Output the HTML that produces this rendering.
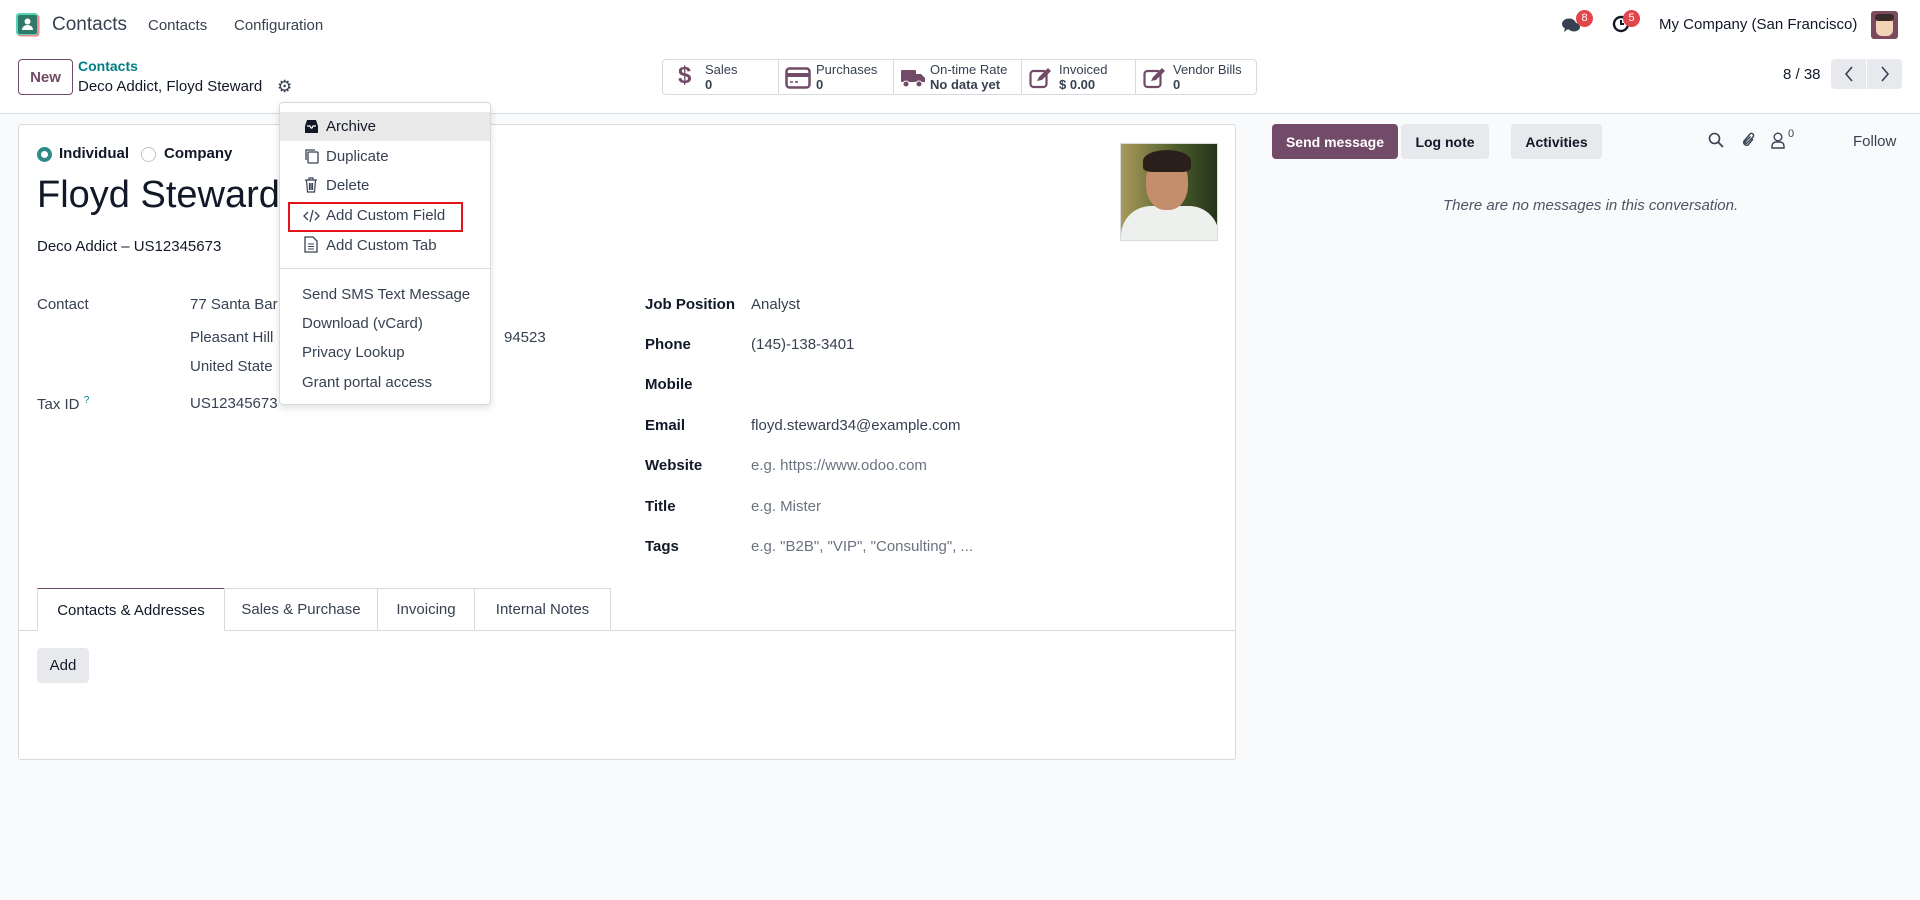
<!DOCTYPE html>
<html><head><meta charset="utf-8">
<style>
*{box-sizing:border-box;margin:0;padding:0}
body{width:1920px;height:900px;overflow:hidden;background:#f9fafb;font-family:"Liberation Sans",sans-serif;font-size:15px;color:#374151;position:relative}
.a{position:absolute;white-space:nowrap}
.nav{position:absolute;left:0;top:0;width:1920px;height:49px;background:#fff}
.cp{position:absolute;left:0;top:49px;width:1920px;height:65px;background:#fff;border-bottom:1px solid #d8dadd}
.btn{position:absolute;border-radius:4px;display:flex;align-items:center;justify-content:center;font-weight:bold}
.sheet{position:absolute;left:18px;top:124px;width:1218px;height:636px;background:#fff;border:1px solid #d8dadd;border-radius:3px}
.lbl{font-weight:bold;color:#111827}
.ph{color:#6b7280}
.dd{position:absolute;left:279px;top:102px;width:212px;height:303px;background:#fff;border:1px solid #d8dadd;border-radius:4px;box-shadow:0 3px 8px rgba(0,0,0,.12)}
.tab{position:absolute;top:588px;height:42px;border:1px solid #d8dadd;border-bottom:none;display:flex;align-items:center;justify-content:center;color:#374151}
</style></head><body>
<div class="nav">
  <svg class="a" style="left:16px;top:13px" width="24" height="24" viewBox="0 0 24 24"><rect x="1.5" y="1.5" width="22" height="22" rx="3" fill="#f08a8a"/><rect x="0" y="0" width="22" height="22" rx="3" fill="#5bd1b5"/><rect x="2" y="2" width="19" height="19" rx="2" fill="#2e7a6a"/><circle cx="11.5" cy="8.5" r="3" fill="#fff"/><path d="M6 17c0-3 2.5-5 5.5-5s5.5 2 5.5 5z" fill="#fff"/></svg>
  <div class="a" style="left:52px;top:14px;font-size:19px;color:#374151">Contacts</div>
  <div class="a" style="left:148px;top:17px">Contacts</div>
  <div class="a" style="left:234px;top:17px">Configuration</div>
  <svg class="a" style="left:1561px;top:17px" width="20" height="18" viewBox="0 0 20 18"><ellipse cx="8" cy="7" rx="7" ry="5.5" fill="#374151"/><path d="M4 11l-1 4 4-3z" fill="#374151"/><ellipse cx="13" cy="10" rx="6" ry="4.5" fill="#374151"/></svg>
  <div class="a" style="left:1576px;top:10px;width:17px;height:17px;border-radius:50%;background:#e0464b;color:#fff;font-size:11px;text-align:center;line-height:17px">8</div>
  <svg class="a" style="left:1612px;top:15px" width="18" height="18" viewBox="0 0 18 18"><circle cx="9" cy="9" r="7" fill="none" stroke="#111827" stroke-width="2.4"/><path d="M9 5v4h3" stroke="#111827" stroke-width="2" fill="none"/></svg>
  <div class="a" style="left:1623px;top:10px;width:17px;height:17px;border-radius:50%;background:#e0464b;color:#fff;font-size:11px;text-align:center;line-height:17px">5</div>
  <div class="a" style="left:1659px;top:16px;color:#111827">My Company (San Francisco)</div>
  <div class="a" style="left:1871px;top:11px;width:27px;height:28px;border-radius:3px;background:#7b4a5e;overflow:hidden"><div style="position:absolute;left:5px;top:6px;width:17px;height:19px;background:#f3d3b8;border-radius:6px"></div><div style="position:absolute;left:4px;top:3px;width:19px;height:7px;background:#3a2a2a;border-radius:4px"></div></div>
</div>
<div class="cp">
  <div class="btn" style="left:18px;top:10px;width:55px;height:36px;border:1px solid #714b67;color:#714b67;background:#fff">New</div>
  <div class="a" style="left:78px;top:9px;color:#017e84;font-weight:bold;font-size:14px">Contacts</div>
  <div class="a" style="left:78px;top:29px;color:#111827">Deco Addict, Floyd Steward</div>
  <div class="a" style="left:277px;top:28px;font-size:17px;color:#374151">⚙</div>
  <div class="a" style="left:662px;top:10px;width:595px;height:36px;border:1px solid #d8dadd;border-radius:4px;background:#fff">
    <div class="a" style="left:115px;top:0;height:34px;border-left:1px solid #d8dadd"></div>
    <div class="a" style="left:230px;top:0;height:34px;border-left:1px solid #d8dadd"></div>
    <div class="a" style="left:358px;top:0;height:34px;border-left:1px solid #d8dadd"></div>
    <div class="a" style="left:472px;top:0;height:34px;border-left:1px solid #d8dadd"></div>
    <div class="a" style="left:15px;top:2px;font-size:24px;font-weight:bold;color:#714b67">$</div>
    <div class="a" style="left:42px;top:2px;font-size:13px;line-height:15px;color:#374151">Sales<br><b>0</b></div>
    <svg class="a" style="left:122px;top:7px" width="26" height="22" viewBox="0 0 26 22"><rect x="1.5" y="1.5" width="23" height="19" rx="3" fill="none" stroke="#714b67" stroke-width="2.5"/><rect x="1" y="6" width="24" height="4" fill="#714b67"/><path d="M5 15h3M10 15h3" stroke="#714b67" stroke-width="1.5"/></svg>
    <div class="a" style="left:153px;top:2px;font-size:13px;line-height:15px">Purchases<br><b>0</b></div>
    <svg class="a" style="left:238px;top:8px" width="24" height="20" viewBox="0 0 24 20"><rect x="0" y="2" width="15" height="12" rx="1" fill="#714b67"/><path d="M15 6h5l4 4v4h-9z" fill="#714b67"/><circle cx="5" cy="16" r="3" fill="#714b67" stroke="#fff"/><circle cx="18" cy="16" r="3" fill="#714b67" stroke="#fff"/></svg>
    <div class="a" style="left:267px;top:2px;font-size:13px;line-height:15px">On-time Rate<br><b>No data yet</b></div>
    <svg class="a" style="left:366px;top:7px" width="24" height="22" viewBox="0 0 24 22"><rect x="1.5" y="4" width="16" height="16" rx="3" fill="none" stroke="#714b67" stroke-width="2.2"/><path d="M8 14l2-4 9-9 3 3-9 9z" fill="#714b67"/></svg>
    <div class="a" style="left:396px;top:2px;font-size:13px;line-height:15px">Invoiced<br><b>$ 0.00</b></div>
    <svg class="a" style="left:480px;top:7px" width="24" height="22" viewBox="0 0 24 22"><rect x="1.5" y="4" width="16" height="16" rx="3" fill="none" stroke="#714b67" stroke-width="2.2"/><path d="M8 14l2-4 9-9 3 3-9 9z" fill="#714b67"/></svg>
    <div class="a" style="left:510px;top:2px;font-size:13px;line-height:15px">Vendor Bills<br><b>0</b></div>
  </div>
  <div class="a" style="left:1783px;top:17px;color:#111827">8 / 38</div>
  <div class="btn" style="left:1831px;top:10px;width:35px;height:30px;background:#e7e9ed;border-radius:4px 0 0 4px"><svg width="10" height="16" viewBox="0 0 10 16"><path d="M8 1L2 8l6 7" fill="none" stroke="#374151" stroke-width="1.6"/></svg></div>
  <div class="btn" style="left:1867px;top:10px;width:35px;height:30px;background:#e7e9ed;border-radius:0 4px 4px 0"><svg width="10" height="16" viewBox="0 0 10 16"><path d="M2 1l6 7-6 7" fill="none" stroke="#374151" stroke-width="1.6"/></svg></div>
</div>
<div class="sheet">
  <div class="a" style="left:18px;top:22px;width:15px;height:15px;border-radius:50%;border:4px solid #2f8b87"></div>
  <div class="a lbl" style="left:40px;top:20px">Individual</div>
  <div class="a" style="left:122px;top:22px;width:15px;height:15px;border-radius:50%;border:1px solid #c0c4ca"></div>
  <div class="a lbl" style="left:145px;top:20px">Company</div>
  <div class="a" style="left:18px;top:49px;font-size:38px;color:#111827">Floyd Steward</div>
  <div class="a" style="left:18px;top:113px;color:#111827">Deco Addict – US12345673</div>
  <div class="a" style="left:18px;top:171px">Contact</div>
  <div class="a" style="left:171px;top:171px">77 Santa Bar</div>
  <div class="a" style="left:171px;top:204px">Pleasant Hill</div>
  <div class="a" style="left:485px;top:204px">94523</div>
  <div class="a" style="left:171px;top:233px">United State</div>
  <div class="a" style="left:18px;top:270px">Tax ID <sup style="color:#017e84;font-size:10px">?</sup></div>
  <div class="a" style="left:171px;top:270px">US12345673</div>
  <div class="a lbl" style="left:626px;top:171px">Job Position</div><div class="a" style="left:732px;top:171px">Analyst</div>
  <div class="a lbl" style="left:626px;top:211px">Phone</div><div class="a" style="left:732px;top:211px">(145)-138-3401</div>
  <div class="a lbl" style="left:626px;top:251px">Mobile</div>
  <div class="a lbl" style="left:626px;top:292px">Email</div><div class="a" style="left:732px;top:292px">floyd.steward34@example.com</div>
  <div class="a lbl" style="left:626px;top:332px">Website</div><div class="a ph" style="left:732px;top:332px">e.g. https://www.odoo.com</div>
  <div class="a lbl" style="left:626px;top:373px">Title</div><div class="a ph" style="left:732px;top:373px">e.g. Mister</div>
  <div class="a lbl" style="left:626px;top:413px">Tags</div><div class="a ph" style="left:732px;top:413px">e.g. "B2B", "VIP", "Consulting", ...</div>
  <div class="a" style="left:1101px;top:18px;width:98px;height:98px;border:1px solid #d8dadd;background:linear-gradient(90deg,#a99a5a,#4a5a2a 60%,#23341a);overflow:hidden">
    <div style="position:absolute;left:0;top:62px;width:98px;height:40px;background:#eef0ee;border-radius:30px 30px 0 0"></div>
    <div style="position:absolute;left:25px;top:12px;width:42px;height:54px;background:#c48d6c;border-radius:45%"></div>
    <div style="position:absolute;left:22px;top:6px;width:48px;height:22px;background:#2a1f1a;border-radius:50% 50% 20% 20%"></div>
  </div>
  <div class="a" style="left:0;top:505px;width:1216px;border-top:1px solid #d8dadd"></div>
</div>
<div class="tab" style="left:37px;width:188px;background:#fff;border-top:1px solid #714b67;color:#111827;height:43px">Contacts &amp; Addresses</div>
<div class="tab" style="left:224px;width:154px">Sales &amp; Purchase</div>
<div class="tab" style="left:377px;width:98px">Invoicing</div>
<div class="tab" style="left:474px;width:137px">Internal Notes</div>
<div class="btn" style="left:37px;top:648px;width:52px;height:35px;background:#e7e9ed;color:#111827;font-weight:normal">Add</div>

<div class="btn" style="left:1272px;top:124px;width:126px;height:35px;background:#714b67;color:#fff;font-size:14px">Send message</div>
<div class="btn" style="left:1401px;top:124px;width:88px;height:35px;background:#e7e9ed;color:#111827;font-size:14px">Log note</div>
<div class="btn" style="left:1511px;top:124px;width:91px;height:35px;background:#e7e9ed;color:#111827;font-size:14px">Activities</div>
<svg class="a" style="left:1708px;top:132px" width="16" height="16" viewBox="0 0 16 16"><circle cx="6.5" cy="6.5" r="5" fill="none" stroke="#374151" stroke-width="1.6"/><path d="M10 10l5 5" stroke="#374151" stroke-width="1.8"/></svg>
<svg class="a" style="left:1741px;top:131px" width="16" height="18" viewBox="0 0 16 18"><path d="M12 8l-5 6a3 3 0 0 1-4-4l6-7a2 2 0 0 1 3 3l-6 6a1 1 0 0 1-1.5-1.5l5-5" fill="none" stroke="#374151" stroke-width="1.4"/></svg>
<svg class="a" style="left:1771px;top:132px" width="14" height="17" viewBox="0 0 14 17"><circle cx="7" cy="5" r="3.8" fill="none" stroke="#374151" stroke-width="1.4"/><path d="M1 16v-2a4 4 0 0 1 4-4h4a4 4 0 0 1 4 4v2z" fill="none" stroke="#374151" stroke-width="1.4"/></svg>
<div class="a" style="left:1788px;top:128px;font-size:11px">0</div>
<div class="a" style="left:1853px;top:133px;color:#374151">Follow</div>
<div class="a" style="left:1443px;top:197px;font-style:italic;color:#4b5563;font-size:15px">There are no messages in this conversation.</div>

<div class="dd">
  <div class="a" style="left:0;top:9px;width:210px;height:29px;background:#e9e9ea"></div>
  <svg class="a" style="left:24px;top:16px" width="15" height="15" viewBox="0 0 15 15"><path d="M1 7l2-6h9l2 6v7H1z" fill="#111827"/><path d="M3 7h3l1 2h1l1-2h3" stroke="#fff" stroke-width="1.2" fill="none"/></svg>
  <div class="a" style="left:46px;top:15px;color:#111827">Archive</div>
  <svg class="a" style="left:24px;top:45px" width="15" height="16" viewBox="0 0 15 16"><rect x="4" y="4" width="10" height="11" rx="1" fill="none" stroke="#374151" stroke-width="1.3"/><path d="M2 12V2h9" fill="none" stroke="#374151" stroke-width="1.3"/></svg>
  <div class="a" style="left:46px;top:45px">Duplicate</div>
  <svg class="a" style="left:24px;top:74px" width="14" height="16" viewBox="0 0 14 16"><path d="M1 3h12M5 3V1h4v2M2.5 3l1 12h7l1-12M5.5 6v7M7 6v7M8.5 6v7" fill="none" stroke="#374151" stroke-width="1.2"/></svg>
  <div class="a" style="left:46px;top:74px">Delete</div>
  <div class="a" style="left:8px;top:99px;width:175px;height:30px;border:2px solid #e3131b"></div>
  <svg class="a" style="left:23px;top:106px" width="17" height="14" viewBox="0 0 17 14"><path d="M5 3L1 7l4 4M12 3l4 4-4 4M10 1L7 13" fill="none" stroke="#374151" stroke-width="1.3"/></svg>
  <div class="a" style="left:46px;top:104px">Add Custom Field</div>
  <svg class="a" style="left:24px;top:133px" width="14" height="17" viewBox="0 0 14 17"><path d="M1 1h8l4 4v11H1z" fill="none" stroke="#374151" stroke-width="1.3"/><path d="M4 8h6M4 10.5h6M4 13h6" stroke="#374151"/></svg>
  <div class="a" style="left:46px;top:134px">Add Custom Tab</div>
  <div class="a" style="left:0;top:165px;width:210px;border-top:1px solid #d8dadd"></div>
  <div class="a" style="left:22px;top:183px">Send SMS Text Message</div>
  <div class="a" style="left:22px;top:212px">Download (vCard)</div>
  <div class="a" style="left:22px;top:241px">Privacy Lookup</div>
  <div class="a" style="left:22px;top:271px">Grant portal access</div>
</div>
</body></html>
